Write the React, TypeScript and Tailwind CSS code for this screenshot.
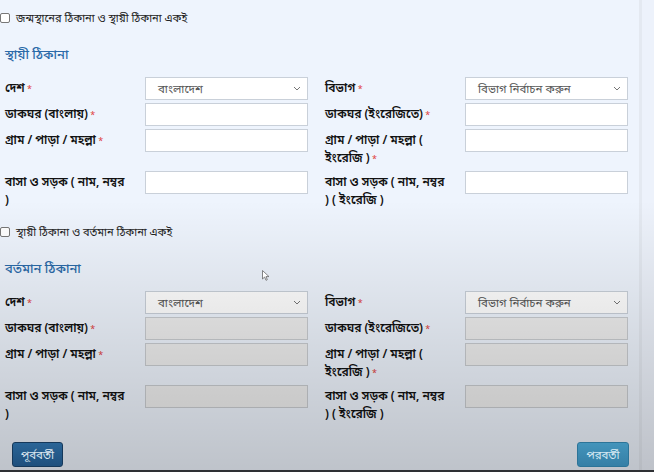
import React from "react";

type Field = { label: string; kind: "select" | "input"; placeholder?: string; required?: boolean };

const leftFields: Field[] = [
  { label: "দেশ", kind: "select", placeholder: "বাংলাদেশ", required: true },
  { label: "ডাকঘর (বাংলায়)", kind: "input", required: true },
  { label: "গ্রাম / পাড়া / মহল্লা", kind: "input", required: true },
  { label: "বাসা ও সড়ক ( নাম, নম্বর )", kind: "input" },
];

const rightFields: Field[] = [
  { label: "বিভাগ", kind: "select", placeholder: "বিভাগ নির্বাচন করুন", required: true },
  { label: "ডাকঘর (ইংরেজিতে)", kind: "input", required: true },
  { label: "গ্রাম / পাড়া / মহল্লা ( ইংরেজি )", kind: "input", required: true },
  { label: "বাসা ও সড়ক ( নাম, নম্বর ) ( ইংরেজি )", kind: "input" },
];

function Checkbox({ text }: { text: string }) {
  return (
    <label className="flex items-center gap-[6px] h-[14px] text-[11px] text-[#222]">
      <span className="w-[10px] h-[10px] border border-[#777] rounded-[2px] bg-white" />
      {text}
    </label>
  );
}

function Control({ field, disabled }: { field: Field; disabled: boolean }) {
  if (field.kind === "select") {
    return (
      <div className="w-[163px] h-[23px] shrink-0 border border-[#c9d0d9] bg-white flex items-center justify-between pl-[12px] pr-[6px] text-[11.5px] text-[#555]">
        <span>{field.placeholder}</span>
        <svg width="8" height="5" viewBox="0 0 8 5" fill="none" stroke="#777" strokeWidth="1">
          <polyline points="1 1 4 4 7 1" />
        </svg>
      </div>
    );
  }
  return (
    <div
      className={
        disabled
          ? "w-[163px] h-[23px] shrink-0 border border-[#c9ccd0] bg-[#eeeeee]"
          : "w-[163px] h-[23px] shrink-0 border border-[#c9d0d9] bg-white"
      }
    />
  );
}

function Cell({ field, disabled }: { field: Field; disabled: boolean }) {
  return (
    <div className="flex items-start w-[303px]">
      <div className="w-[140px] shrink-0 pt-[2px] pr-[16px] text-[12px] leading-[18px] font-semibold text-[#111]">
        {field.label}
        {field.required && <span className="text-[#e03c3c] text-[9px] font-normal"> *</span>}
      </div>
      <Control field={field} disabled={disabled} />
    </div>
  );
}

function AddressSection({ title, disabled }: { title: string; disabled: boolean }) {
  return (
    <div className="flex flex-col">
      <h3 className="mt-[21px] pl-[5px] text-[13px] leading-[16px] font-medium text-[#2a6aa8]">{title}</h3>
      <div className="mt-[15px] pl-[5px] flex flex-col gap-[3px]">
        {leftFields.map((f, i) => (
          <div key={f.label} className="flex gap-[17px]">
            <Cell field={f} disabled={disabled} />
            <Cell field={rightFields[i]} disabled={disabled} />
          </div>
        ))}
      </div>
    </div>
  );
}

export default function App() {
  return (
    <div className="relative w-[654px] h-[472px] overflow-hidden flex flex-col bg-[#eef4fd] font-['Noto_Sans','Noto_Sans_Bengali',sans-serif]">
      <div className="flex h-[470px]">
        <div className="w-[642px] border-r-[3px] border-[#e4e9f1] flex flex-col pt-[11px]">
          <Checkbox text="জন্মস্থানের ঠিকানা ও স্থায়ী ঠিকানা একই" />
          <AddressSection title="স্থায়ী ঠিকানা" disabled={false} />

          <div className="mt-[16px]">
            <Checkbox text="স্থায়ী ঠিকানা ও বর্তমান ঠিকানা একই" />
          </div>
          <AddressSection title="বর্তমান ঠিকানা" disabled={true} />

          <div className="mt-[19px] pl-[12px] w-[629px] flex justify-between">
            <button className="relative z-10 w-[51px] h-[25px] rounded-[3px] border border-[#15385a] bg-gradient-to-b from-[#2a6597] to-[#1e4f7d] text-[11.5px] text-[#dde7f0]">
              পূর্ববর্তী
            </button>
            <button className="relative z-10 w-[52px] h-[25px] rounded-[3px] border border-[#2c7498] bg-gradient-to-b from-[#4394bb] to-[#357fa6] text-[11.5px] text-[#d5e9f3]">
              পরবর্তী
            </button>
          </div>
        </div>
        <div className="flex-1 bg-[#edf2fb]" />
      </div>
      <div className="h-[2px] bg-[#2e3034]" />

      {/* darkening towards the bottom of the capture */}
      <div className="pointer-events-none absolute inset-x-0 top-[200px] bottom-[2px] bg-gradient-to-b from-transparent via-[rgba(0,0,0,0.1)] to-[rgba(0,0,0,0.2)]" />

      {/* mouse pointer */}
      <svg className="pointer-events-none absolute left-[262px] top-[270px]" width="8" height="11" viewBox="0 0 8 11">
        <path d="M0.5 0.5 L0.5 9 L2.6 7 L4 10.3 L5.3 9.7 L4 6.6 L7 6.6 Z" fill="#fff" stroke="#666" strokeWidth="0.8" />
      </svg>
    </div>
  );
}
